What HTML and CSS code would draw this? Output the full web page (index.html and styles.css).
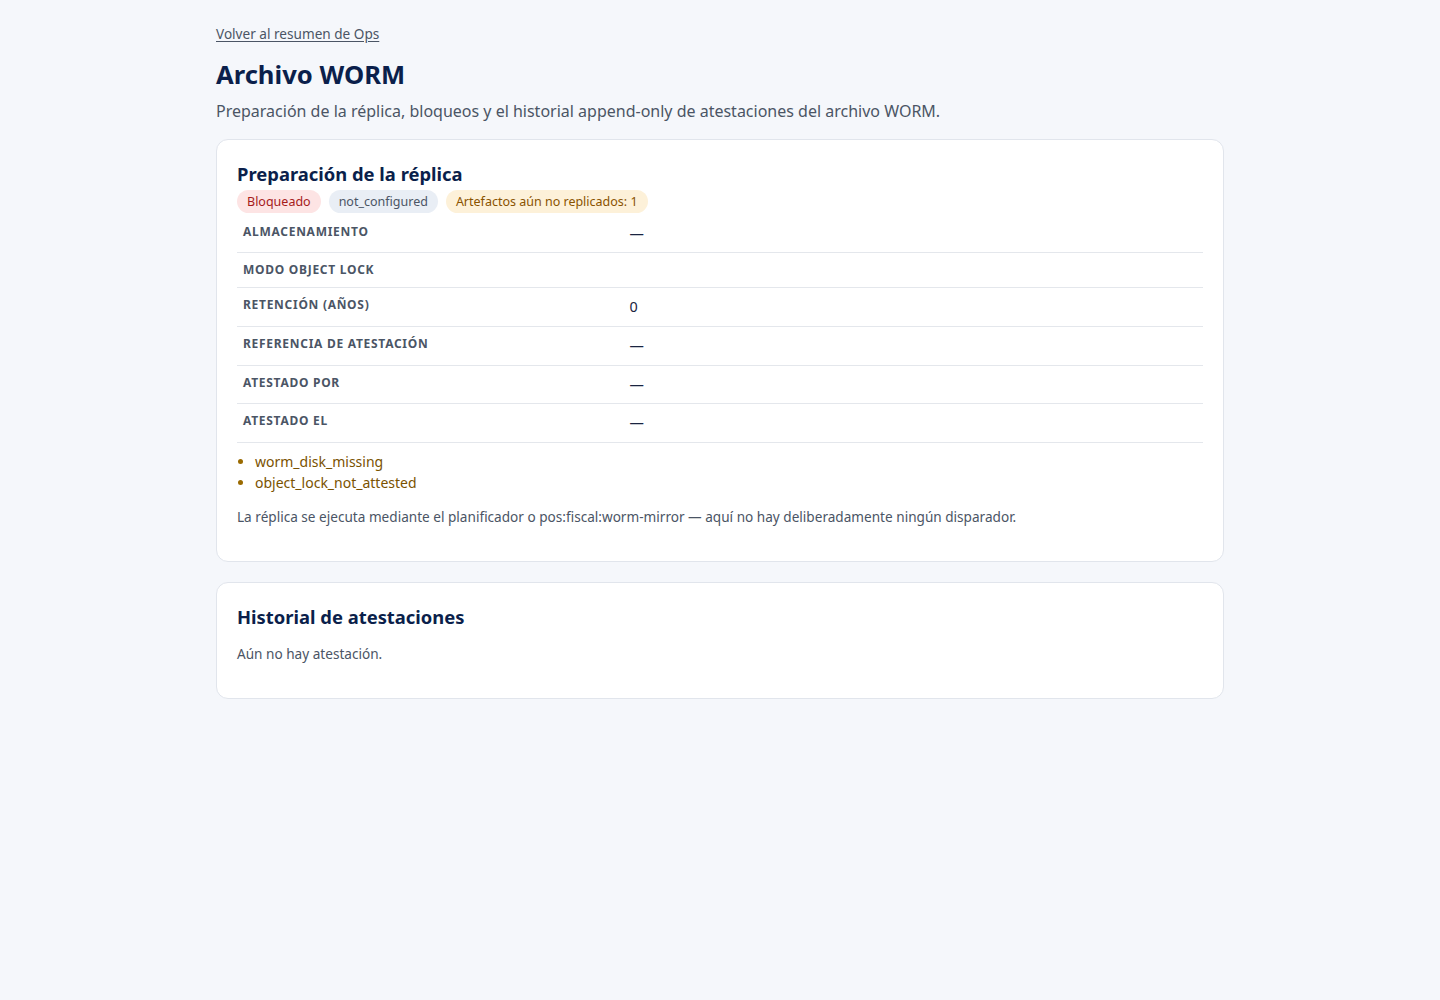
FILE: index.html
```html
<!DOCTYPE html>
<html lang="es">
<head>
<meta charset="utf-8">
<title>Archivo WORM</title>
<link rel="stylesheet" href="styles.css">
</head>
<body>
<main class="page">
  <a class="back" href="#">Volver al resumen de Ops</a>
  <h1 class="title">Archivo WORM</h1>
  <p class="subtitle">Preparación de la réplica, bloqueos y el historial append-only de atestaciones del archivo WORM.</p>

  <section class="card">
    <h2 class="card-title">Preparación de la réplica</h2>
    <div class="badges">
      <span class="badge badge-danger">Bloqueado</span>
      <span class="badge badge-neutral">not_configured</span>
      <span class="badge badge-warn">Artefactos aún no replicados: 1</span>
    </div>
    <table class="kv">
      <tbody>
        <tr><th>Almacenamiento</th><td>—</td></tr>
        <tr><th>Modo Object Lock</th><td></td></tr>
        <tr><th>Retención (años)</th><td>0</td></tr>
        <tr><th>Referencia de atestación</th><td>—</td></tr>
        <tr><th>Atestado por</th><td>—</td></tr>
        <tr><th>Atestado el</th><td>—</td></tr>
      </tbody>
    </table>
    <ul class="blockers">
      <li>worm_disk_missing</li>
      <li>object_lock_not_attested</li>
    </ul>
    <p class="muted">La réplica se ejecuta mediante el planificador o pos:fiscal:worm-mirror — aquí no hay deliberadamente ningún disparador.</p>
  </section>

  <section class="card">
    <h2 class="card-title">Historial de atestaciones</h2>
    <p class="muted empty">Aún no hay atestación.</p>
  </section>
</main>
</body>
</html>
```

FILE: styles.css
```css
* { box-sizing: border-box; }
html, body { margin: 0; padding: 0; }
body {
  background: #f5f7fb;
  font-family: "Noto Sans", "Open Sans", sans-serif;
  color: #1f2937;
  line-height: 1.5;
  font-size: 16px;
}
.page {
  width: 1008px;
  margin: 0 auto;
  padding: 24px 0 40px;
  display: flex;
  flex-direction: column;
}
.back {
  align-self: flex-start;
  font-size: 13.6px;
  color: #4b5565;
  text-decoration: underline;
  text-underline-offset: 2px;
}
.title {
  margin: 16px 0 0;
  font-size: 25.6px;
  line-height: 1.2;
  font-weight: 700;
  color: #0b1f4b;
}
.subtitle {
  margin: 8px 0 16px;
  font-size: 16px;
  color: #4b5565;
}
.card {
  background: #ffffff;
  border: 1px solid #e1e5ec;
  border-radius: 12px;
  padding: 20px 20px 20px;
  margin-bottom: 20px;
}
.card-title {
  margin: 0 0 2px;
  font-size: 18.4px;
  line-height: 1.5;
  font-weight: 700;
  color: #0b1f4b;
}
.badges {
  display: flex;
  gap: 8px;
  flex-wrap: wrap;
  margin-bottom: 2px;
}
.badge {
  display: inline-block;
  font-size: 12.5px;
  line-height: 19px;
  padding: 2px 10px;
  border-radius: 999px;
}
.badge-danger { background: #fde4e4; color: #a61b1b; }
.badge-neutral { background: #e9eef5; color: #4b5565; }
.badge-warn { background: #fdf1d9; color: #8a5300; }
.kv {
  width: 100%;
  border-collapse: collapse;
}
.kv th, .kv td {
  padding: 8px 6px;
  border-bottom: 1px solid #e4e7ec;
  text-align: left;
  vertical-align: top;
}
.kv th {
  width: 40%;
  font-size: 12px;
  line-height: 18px;
  font-weight: 700;
  text-transform: uppercase;
  letter-spacing: 0.06em;
  color: #4b5565;
}
.kv td {
  font-size: 14.4px;
  line-height: 1.5;
  color: #1a2440;
}
.blockers {
  margin: 8px 0 0;
  padding-left: 18px;
  font-size: 14px;
  line-height: 21px;
  color: #7a5200;
}
.blockers li::marker { color: #9a6a00; }
.muted {
  margin: 14px 0 14px;
  font-size: 13.6px;
  color: #4b5565;
}
.empty {
  margin: 13px 0 14px;
}
```
